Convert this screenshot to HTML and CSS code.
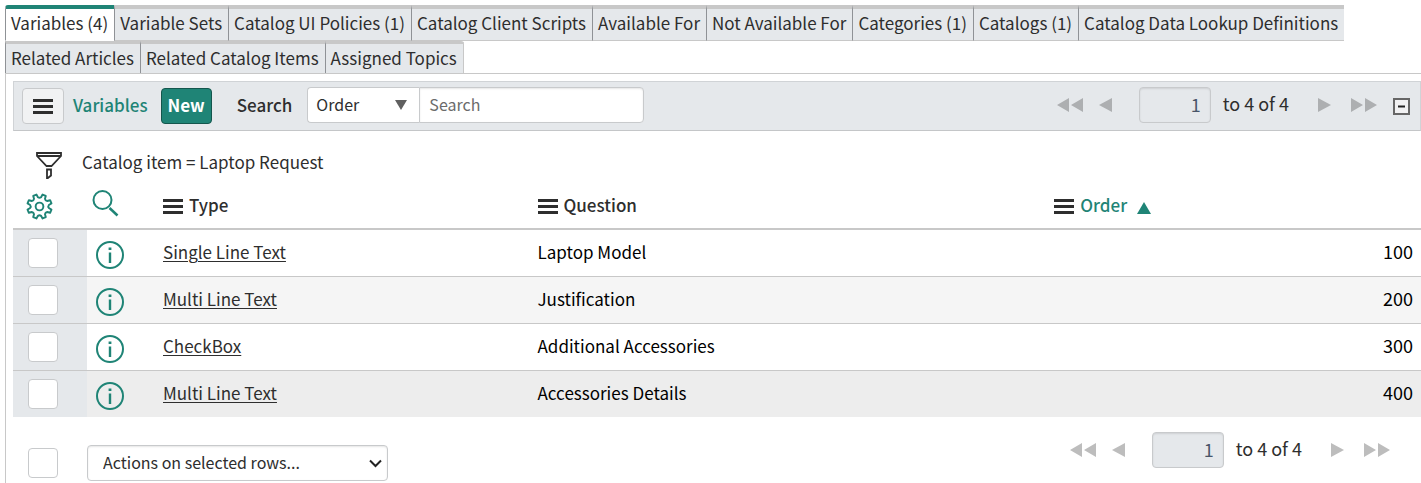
FILE: index.html
```
<!DOCTYPE html>
<html lang="en">
<head>
<meta charset="utf-8">
<title>Variables</title>
<link rel="stylesheet" href="styles.css">
</head>
<body>
<svg class="defs" aria-hidden="true">
  <symbol id="bars" viewBox="0 0 20 16"><path d="M0 0h20v3H0zM0 6h20v3H0zM0 12h20v3H0z" fill="currentColor"/></symbol>
  <symbol id="prev" viewBox="0 0 13 14"><path d="M13 0v14L0 7z" fill="currentColor"/></symbol>
  <symbol id="next" viewBox="0 0 13 14"><path d="M0 0v14l13-7z" fill="currentColor"/></symbol>
  <symbol id="first" viewBox="0 0 26 14"><path d="M12 0v14L0 7zM26 0v14L14 7z" fill="currentColor"/></symbol>
  <symbol id="last" viewBox="0 0 26 14"><path d="M0 0v14l12-7zM14 0v14l12-7z" fill="currentColor"/></symbol>
  <symbol id="info" viewBox="0 0 28 28"><circle cx="14" cy="14" r="13" fill="none" stroke="currentColor" stroke-width="2"/><path d="M12.800 11.500h2.400V22h-2.400zM12.600 6.500h2.800v2.500h-2.800z" fill="currentColor"/></symbol>
</svg>
<nav class="tabs" role="tablist">
  <button class="tab active" role="tab" aria-selected="true">Variables (4)</button>
  <button class="tab" role="tab">Variable Sets</button>
  <button class="tab" role="tab">Catalog UI Policies (1)</button>
  <button class="tab" role="tab">Catalog Client Scripts</button>
  <button class="tab" role="tab">Available For</button>
  <button class="tab" role="tab">Not Available For</button>
  <button class="tab" role="tab">Categories (1)</button>
  <button class="tab" role="tab">Catalogs (1)</button>
  <button class="tab" role="tab">Catalog Data Lookup Definitions</button>
  <button class="tab" role="tab">Related Articles</button>
  <button class="tab" role="tab">Related Catalog Items</button>
  <button class="tab" role="tab">Assigned Topics</button>
</nav>
<main class="panel">
  <header class="toolbar">
    <button class="menu" aria-label="List menu"><svg class="bars"><use href="#bars"/></svg></button>
    <a class="title" href="#">Variables</a>
    <button class="new">New</button>
    <label class="search-label" for="field">Search</label>
    <div class="search">
      <div class="field-wrap">
        <select id="field" class="field"><option>Order</option></select>
        <svg class="field-arrow" viewBox="0 0 12 10"><path d="M0 0h12L6 10z" fill="currentColor"/></svg>
      </div>
      <input class="query" type="text" placeholder="Search" aria-label="Search">
    </div>
    <div class="pager">
      <button class="step" aria-label="First page"><svg class="double"><use href="#first"/></svg></button>
      <button class="step" aria-label="Previous page"><svg class="single"><use href="#prev"/></svg></button>
      <input class="page" type="text" value="1" aria-label="First row" disabled>
      <span class="total">to 4 of 4</span>
      <button class="step" aria-label="Next page"><svg class="single"><use href="#next"/></svg></button>
      <button class="step" aria-label="Last page"><svg class="double"><use href="#last"/></svg></button>
    </div>
    <button class="collapse" aria-label="Collapse list"><svg class="collapse-icon" viewBox="0 0 17 17"><rect x="1" y="1" width="15" height="15" fill="#f1f1f2" stroke="#666" stroke-width="2"/><path d="M5 7.500h7v2H5z" fill="#222"/></svg></button>
  </header>
  <div class="filter">
    <button class="plain" aria-label="Edit filter"><svg class="funnel" viewBox="0 0 26 28" fill="none" stroke="#2e2e2e" stroke-width="1.800"><path d="M1 1h24v3L15.500 14h-5L1 4zM1 4h24M11 17.500h4v6L11.800 26H11z"/></svg></button>
    <a class="crumb" href="#">Catalog item = Laptop Request</a>
  </div>
  <table class="list">
    <colgroup><col class="c-check"><col class="c-info"><col class="c-type"><col class="c-question"><col></colgroup>
    <thead>
      <tr>
        <th class="gear-cell"><button class="plain" aria-label="Personalize list"><svg class="gear" viewBox="0 0 28 28" fill="none" stroke="currentColor" stroke-width="2" stroke-linejoin="round"><path d="M23.700 15.600 26.400 17.200 25 20.500 22 19.700Q20 20 19.700 22L20.500 25 17.200 26.400 15.600 23.700Q14 22.500 12.400 23.700L10.800 26.400 7.500 25 8.300 22Q8 20 6 19.700L3 20.500 1.600 17.200 4.300 15.600Q5.500 14 4.300 12.400L1.600 10.800 3 7.500 6 8.300Q8 8 8.300 6L7.500 3 10.800 1.600 12.400 4.300Q14 5.500 15.600 4.300L17.200 1.600 20.500 3 19.700 6Q20 8 22 8.300L25 7.500 26.400 10.800 23.700 12.400Q22.500 14 23.700 15.600z"/><circle cx="14" cy="14" r="4"/></svg></button></th>
        <th class="glass-cell"><button class="plain" aria-label="Search columns"><svg class="glass" viewBox="0 0 27 27" fill="none" stroke="currentColor"><circle cx="10.500" cy="10" r="9" stroke-width="2"/><path d="M17.500 18l8 7.500" stroke-width="2.500"/></svg></button></th>
        <th><span class="head"><svg class="bars"><use href="#bars"/></svg><span class="name">Type</span></span></th>
        <th><span class="head"><svg class="bars"><use href="#bars"/></svg><span class="name">Question</span></span></th>
        <th><span class="head"><svg class="bars"><use href="#bars"/></svg><span class="name sorted">Order</span><svg class="sort" viewBox="0 0 14 12"><path d="M7 0l7 12H0z" fill="currentColor"/></svg></span></th>
      </tr>
    </thead>
    <tbody>
      <tr><td class="pick"><input class="box" type="checkbox" aria-label="Select Laptop Model"></td><td class="info-cell"><button class="plain" aria-label="Preview"><svg class="info"><use href="#info"/></svg></button></td><td><a href="#">Single Line Text</a></td><td>Laptop Model</td><td class="num">100</td></tr>
      <tr><td class="pick"><input class="box" type="checkbox" aria-label="Select Justification"></td><td class="info-cell"><button class="plain" aria-label="Preview"><svg class="info"><use href="#info"/></svg></button></td><td><a href="#">Multi Line Text</a></td><td>Justification</td><td class="num">200</td></tr>
      <tr><td class="pick"><input class="box" type="checkbox" aria-label="Select Additional Accessories"></td><td class="info-cell"><button class="plain" aria-label="Preview"><svg class="info"><use href="#info"/></svg></button></td><td><a href="#">CheckBox</a></td><td>Additional Accessories</td><td class="num">300</td></tr>
      <tr class="hover"><td class="pick"><input class="box" type="checkbox" aria-label="Select Accessories Details"></td><td class="info-cell"><button class="plain" aria-label="Preview"><svg class="info"><use href="#info"/></svg></button></td><td><a href="#">Multi Line Text</a></td><td>Accessories Details</td><td class="num">400</td></tr>
    </tbody>
  </table>
  <footer class="foot">
    <input class="box" type="checkbox" aria-label="Select all rows">
    <div class="actions-wrap">
      <select class="actions" aria-label="Actions on selected rows"><option>Actions on selected rows...</option></select>
      <svg class="chevron" viewBox="0 0 13 9"><path d="M1 1.500l5.500 5.500L12 1.500" fill="none" stroke="#222" stroke-width="2"/></svg>
    </div>
    <div class="pager light">
      <button class="step" aria-label="First page"><svg class="double"><use href="#first"/></svg></button>
      <button class="step" aria-label="Previous page"><svg class="single"><use href="#prev"/></svg></button>
      <input class="page" type="text" value="1" aria-label="First row" disabled>
      <span class="total">to 4 of 4</span>
      <button class="step" aria-label="Next page"><svg class="single"><use href="#next"/></svg></button>
      <button class="step" aria-label="Last page"><svg class="double"><use href="#last"/></svg></button>
    </div>
  </footer>
</main>
</body>
</html>
```
FILE: styles.css
```
* { box-sizing: border-box; }
body {
  margin: 0;
  padding: 5px 0 0 5px;
  min-height: 100vh;
  display: flex;
  flex-direction: column;
  background: #fff;
  color: #2e2e2e;
  font: 17px/24px "Noto Sans CJK SC", "Noto Sans", sans-serif;
}
button, input, select { font: inherit; color: inherit; margin: 0; }
button { cursor: pointer; }
svg { display: block; }
.defs { position: absolute; width: 0; height: 0; }

.tabs { display: flex; flex-wrap: wrap; }
.tab {
  height: 36px;
  padding: 0 6px 4px 5px;
  border: solid #c8c8c8;
  border-width: 4px 0 1px;
  border-left: 1px solid #8f9296;
  background: #e5e8eb;
  white-space: nowrap;
}
.tab:nth-child(n+10) { height: 33px; border-bottom: 0; border-top-width: 3px; padding-bottom: 2px; }
.tab:last-child { border-right: 1px solid #c8c8c8; border-top-right-radius: 3px; }
.tab.active { background: #fff; border-top-color: #1f8476; border-bottom-color: #fff; border-top-left-radius: 3px; }

.panel { flex: 1; border: 1px solid #c8c8c8; border-width: 1px 0 0 1px; margin-top: -1px; padding: 7px 0 0 7px; }
.toolbar {
  display: flex;
  align-items: center;
  height: 50px;
  padding: 0 10px 0 8px;
  border: 1px solid #d0d3d6;
  border-bottom: 1px solid #c4c6c8;
  background: #e5e8eb;
}
.menu {
  display: flex;
  align-items: center;
  justify-content: center;
  width: 42px;
  height: 36px;
  padding: 2px 0 0;
  border: 1px solid #c8cacc;
  border-radius: 4px;
  background: #f1f2f3;
}
.bars { width: 20px; height: 16px; }
.title { margin-left: 9px; padding-bottom: 3px; color: #1f8476; font-weight: 500; text-decoration: none; }
.new {
  height: 36px;
  margin-left: 13px;
  padding: 0 6px 3px;
  border: 1px solid #14564d;
  border-radius: 4px;
  background: #1f8476;
  color: #fff;
  font-weight: 700;
}
.search-label { margin-left: 25px; padding-bottom: 3px; font-weight: 500; }
.search { display: flex; height: 36px; margin: 0 0 2px 15px; font-size: 16px; }
.field-wrap { position: relative; width: 112px; }
.field {
  appearance: none;
  width: 100%;
  height: 100%;
  padding: 0 8px 3px;
  border: 1px solid #c8cacc;
  border-right: 0;
  border-radius: 4px 0 0 4px;
  background: #fff;
}
.field-arrow { position: absolute; right: 12px; top: 13px; width: 12px; height: 10px; color: #606060; pointer-events: none; }
.query {
  width: 225px;
  padding: 0 9px 3px;
  border: 1px solid #c8cacc;
  border-radius: 0 4px 4px 0;
  background: #fff;
  box-shadow: inset 0 1px 2px #0000001a;
}
.query::placeholder { color: #6b6b6b; opacity: 1; }

.pager { display: flex; align-items: center; margin: 0 0 2px auto; color: #adafb1; font-size: 18px; }
.pager.light { color: #bdbdbd; }
.step { padding: 0; border: 0; background: none; margin-right: 16px; }
.double { width: 26px; height: 14px; }
.single { width: 13px; height: 14px; }
.page {
  width: 72px;
  height: 36px;
  margin-left: 11px;
  padding: 0 9px 2px;
  border: 1px solid #c8cacc;
  border-radius: 4px;
  background: #e5e8eb;
  box-shadow: inset 0 1px 2px #0000001a;
  color: #485568;
  text-align: right;
}
.total { margin: 0 29px 0 12px; padding-bottom: 4px; color: #2e2e2e; white-space: nowrap; }
.step:nth-last-child(2) { margin-right: 20px; }
.collapse { padding: 0; border: 0; background: none; }
.collapse-icon { width: 17px; height: 17px; }

.plain { display: block; padding: 0; border: 0; background: none; color: #1f8476; }
.filter { display: flex; align-items: center; height: 54px; padding: 8px 0 0 23px; }
.funnel { width: 26px; height: 28px; }
.filter .plain { margin-top: 8px; }
.crumb { margin-left: 20px; color: #2e2e2e; text-decoration: none; }

.list { width: 100%; border-collapse: collapse; table-layout: fixed; }
.c-check { width: 74px; }
.c-info { width: 68px; }
.c-type { width: 26.6%; }
.c-question { width: 36.7%; }
th { height: 44px; padding: 0 8px; border-bottom: 2px solid #c8c8c8; text-align: left; font-weight: 500; }
.head { display: flex; align-items: center; gap: 6px; }
.name { padding-bottom: 3px; }
.gear-cell { padding-left: 13px; }
.glass-cell { padding: 0 0 6px 5px; }
.gear, .glass { width: 27px; height: 27px; }
.sorted { color: #1f8476; }
.sort { width: 14px; height: 12px; margin: 2px 0 0 4px; color: #1f8476; }
td { height: 47px; padding: 0 8px 1px; border-bottom: 1px solid #c8c8c8; color: #000; }
tbody tr:nth-child(even) { background: #f5f5f5; }
tbody tr.hover { background: #ededed; }
tbody tr:last-child td { border-bottom: 0; }
td a { color: #2e2e2e; text-decoration-thickness: 1px; text-underline-offset: 2px; }
.pick { padding: 0 0 0 15px; background: #e5e8eb; }
.info-cell { padding: 4px 0 0 9px; }
.info { width: 28px; height: 28px; }
td.num { padding-bottom: 3px; text-align: right; font-size: 18px; }
.box { appearance: none; display: block; width: 30px; height: 30px; border: 1px solid #c8cacc; border-radius: 4px; background: #fff; }

.foot { display: flex; align-items: center; padding: 28px 15px 2px; }
.actions-wrap { position: relative; width: 301px; height: 36px; margin-left: 29px; font-size: 16px; }
.actions {
  appearance: none;
  width: 100%;
  height: 100%;
  padding: 0 15px 2px;
  border: 1px solid #c8cacc;
  border-radius: 4px;
  background: #fff;
  box-shadow: inset 0 1px 2px #0000001a;
}
.chevron { position: absolute; right: 6px; top: 14px; width: 13px; height: 9px; pointer-events: none; }
.foot .pager { align-self: flex-start; margin-top: -13px; }
```
